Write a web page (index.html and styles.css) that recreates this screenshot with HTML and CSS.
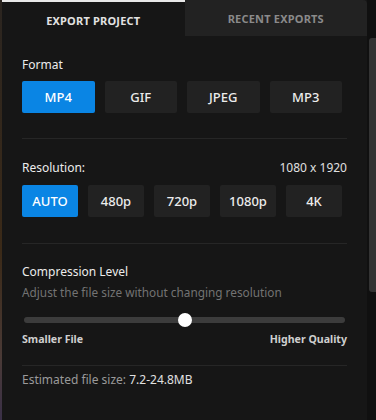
FILE: index.html
```html
<!DOCTYPE html>
<html lang="en">
<head>
  <meta charset="UTF-8" />
  <meta name="viewport" content="width=device-width, initial-scale=1.0"/>
  <title>Export</title>
  <link rel="stylesheet" href="styles.css">
</head>
<body>
  <div class="frame">
    <div class="panel">
      <div class="tabs">
        <div class="tab active">EXPORT PROJECT</div>
        <div class="tab">RECENT EXPORTS</div>
      </div>

      <div class="section format">
        <div class="label">Format</div>
        <div class="options four">
          <button class="opt selected">MP4</button>
          <button class="opt">GIF</button>
          <button class="opt">JPEG</button>
          <button class="opt">MP3</button>
        </div>
      </div>

      <div class="section resolution">
        <div class="label row">
          <span>Resolution:</span>
          <span class="value">1080 x 1920</span>
        </div>
        <div class="options five">
          <button class="opt selected">AUTO</button>
          <button class="opt">480p</button>
          <button class="opt">720p</button>
          <button class="opt">1080p</button>
          <button class="opt">4K</button>
        </div>
      </div>

      <div class="section compression">
        <div class="label">Compression Level</div>
        <div class="hint">Adjust the file size without changing resolution</div>
        <div class="slider">
          <div class="track"></div>
          <div class="thumb"></div>
        </div>
        <div class="ends">
          <span>Smaller File</span>
          <span>Higher Quality</span>
        </div>
      </div>

      <div class="section estimate">
        Estimated file size: <span class="value">7.2-24.8MB</span>
      </div>
    </div>

    <div class="scrollbar">
      <div class="thumb-bar"></div>
    </div>
  </div>
</body>
</html>
```

FILE: styles.css
```css
body {
  margin: 0;
  width: 376px;
  height: 420px;
  overflow: hidden;
  background: linear-gradient(#2b2520, #3b2a18 60%, #4a3a36 85%, #3a3048);
  font-family: 'Noto Sans', 'Open Sans', sans-serif;
}

.frame {
  display: flex;
  height: 420px;
  margin-left: 2px;
}

.panel {
  width: 365px;
  background-color: #161616;
}

.tabs {
  display: flex;
  height: 36px;
}

.tab {
  flex: 1;
  display: flex;
  align-items: center;
  justify-content: center;
  background-color: #222222;
  color: #8a8a8a;
  font-size: 11px;
  font-weight: 700;
  letter-spacing: 0.2px;
  border-top-right-radius: 4px;
}

.tab.active {
  background-color: #161616;
  color: #e2e2e2;
  border-top: 2px solid #e8e8e8;
  border-radius: 0;
  box-sizing: border-box;
  padding-top: 2px;
}

.section {
  margin: 0 20px;
  border-bottom: 1px solid #262626;
}

.label {
  color: #ececec;
  font-size: 12px;
  line-height: 18px;
}

.row {
  display: flex;
  justify-content: space-between;
}

.value {
  color: #e0e0e0;
}

.format {
  padding: 20px 0 25px;
}

.format .options {
  margin-top: 7px;
}

.resolution {
  padding: 20px 0 26px;
}

.compression {
  padding: 19px 0 19px;
}

.options {
  display: grid;
  gap: 10px;
  width: 320px;
  margin-top: 8px;
}

.four {
  grid-template-columns: repeat(4, 1fr);
}

.five {
  grid-template-columns: repeat(5, 1fr);
}

.opt {
  height: 32px;
  border: none;
  border-radius: 2px;
  background-color: #222222;
  color: #ececec;
  font-family: inherit;
  font-size: 13px;
  font-weight: 500;
  padding: 0;
}

.opt.selected {
  background-color: #0a85e4;
  color: #ffffff;
}

.hint {
  color: #737373;
  font-size: 11.8px;
  line-height: 16px;
  margin-top: 3px;
}

.slider {
  position: relative;
  height: 14px;
  margin: 13px 2px 0 2px;
  display: flex;
  align-items: center;
}

.track {
  flex: 1;
  height: 6px;
  border-radius: 3px;
  background-color: #3c3c3c;
}

.thumb {
  position: absolute;
  left: 50%;
  top: 0;
  width: 14px;
  height: 14px;
  margin-left: -7px;
  border-radius: 50%;
  background-color: #ffffff;
}

.ends {
  display: flex;
  justify-content: space-between;
  margin-top: 5px;
  color: #cfcfcf;
  font-size: 10.6px;
  font-weight: 700;
  line-height: 14px;
}

.estimate {
  border-bottom: none;
  padding-top: 5px;
  color: #9a9a9a;
  font-size: 12px;
  line-height: 18px;
}

.scrollbar {
  width: 9px;
  background-color: #101010;
}

.thumb-bar {
  width: 7px;
  height: 254px;
  margin: 38px 0 0 2px;
  border-radius: 3px 0 0 3px;
  background-color: #333333;
}
```
